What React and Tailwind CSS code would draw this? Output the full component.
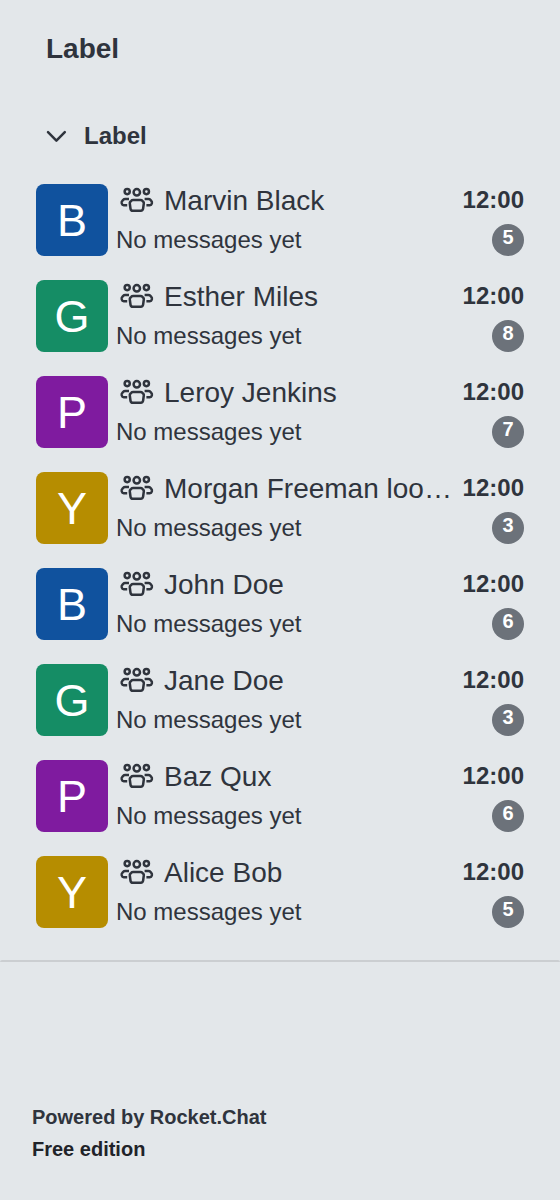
const rooms = [
  { letter: 'B', color: 'bg-[#10529e]', name: 'Marvin Black', unread: 5 },
  { letter: 'G', color: 'bg-[#158d65]', name: 'Esther Miles', unread: 8 },
  { letter: 'P', color: 'bg-[#7f1b9f]', name: 'Leroy Jenkins', unread: 7 },
  { letter: 'Y', color: 'bg-[#b68d00]', name: 'Morgan Freeman loo…', unread: 3 },
  { letter: 'B', color: 'bg-[#10529e]', name: 'John Doe', unread: 6 },
  { letter: 'G', color: 'bg-[#158d65]', name: 'Jane Doe', unread: 3 },
  { letter: 'P', color: 'bg-[#7f1b9f]', name: 'Baz Qux', unread: 6 },
  { letter: 'Y', color: 'bg-[#b68d00]', name: 'Alice Bob', unread: 5 },
];

function TeamIcon() {
  return (
    <svg className="size-10 shrink-0" viewBox="0 0 40 40" fill="none" stroke="currentColor" strokeWidth="2.5" strokeLinecap="butt" strokeLinejoin="round">
      <circle cx="11.2" cy="11.6" r="2.55" />
      <circle cx="20.8" cy="12.3" r="3.2" />
      <circle cx="30.4" cy="11.6" r="2.55" />
      <path d="M17.2 20h7.2c.9 0 1.5.2 2 .8l1 1.1c.4.5.5 1 .4 1.6l-.7 5.2c-.2 1.4-1 2-2.3 2h-8c-1.3 0-2.1-.6-2.3-2l-.7-5.2c-.1-.6 0-1.1.4-1.6l1-1.1c.5-.6 1.1-.8 2-.8Z" />
      <path d="M13 18.9H9.2c-.9 0-1.5.3-1.9.8l-1.1 1.4c-.5.6-.6 1.1-.5 1.8l.2.9c.2 1 .8 1.5 1.8 1.5h3.5" />
      <path d="M28.6 18.9h3.8c.9 0 1.5.3 1.9.8l1.1 1.4c.5.6.6 1.1.5 1.8l-.2.9c-.2 1-.8 1.5-1.8 1.5h-3.5" />
    </svg>
  );
}

function Room({ letter, color, name, unread }) {
  return (
    <li className="flex h-24 items-center gap-2 px-9">
      <div className={`flex size-[72px] shrink-0 items-center justify-center rounded-lg text-[45px] leading-[72px] text-white ${color}`}>
        <span className="pt-0.5">{letter}</span>
      </div>
      <div className="flex h-20 min-w-0 flex-1 flex-col">
        <div className="flex h-10 items-center">
          <TeamIcon />
          <span className="ml-2 min-w-0 flex-1 truncate pt-0.5 text-[28px] leading-10">{name}</span>
          <span className="ml-2 text-2xl leading-10 font-bold">12:00</span>
        </div>
        <div className="flex h-10 items-center justify-between">
          <span className="text-2xl leading-10">No messages yet</span>
          <span className="h-8 w-8 rounded-full bg-[#6c727a] text-center text-xl leading-[27px] font-bold text-white">{unread}</span>
        </div>
      </div>
    </li>
  );
}

export default function App() {
  return (
    <div className="flex h-[1200px] w-[560px] flex-col overflow-hidden bg-[#e3e7ea] font-['Liberation_Sans',sans-serif] text-[#2f343d]">
      <header className="flex h-24 shrink-0 items-center pt-0.5 pl-[46px]">
        <h1 className="text-[28px] leading-10 font-bold">Label</h1>
      </header>
      <div className="flex h-[76px] shrink-0 items-center gap-2 pt-1 pl-9">
        <svg className="size-10" viewBox="0 0 40 40" fill="none" stroke="currentColor" strokeWidth="2.5" strokeLinecap="round" strokeLinejoin="round">
          <path d="m12 16.2 8.4 8.5 8.4-8.5" />
        </svg>
        <h2 className="text-2xl leading-10 font-bold">Label</h2>
      </div>
      <ul className="shrink-0">
        {rooms.map((room, i) => (
          <Room key={i} {...room} />
        ))}
      </ul>
      <footer className="mt-5 flex flex-1 flex-col">
        <hr className="h-0.5 rounded-t-[4px] border-0 bg-[#cbced1]" />
        <div className="mt-[139px] px-8 text-xl leading-8 font-bold">
          <p>Powered by Rocket.Chat</p>
          <p className="text-[#1f2329]">Free edition</p>
        </div>
      </footer>
    </div>
  );
}
